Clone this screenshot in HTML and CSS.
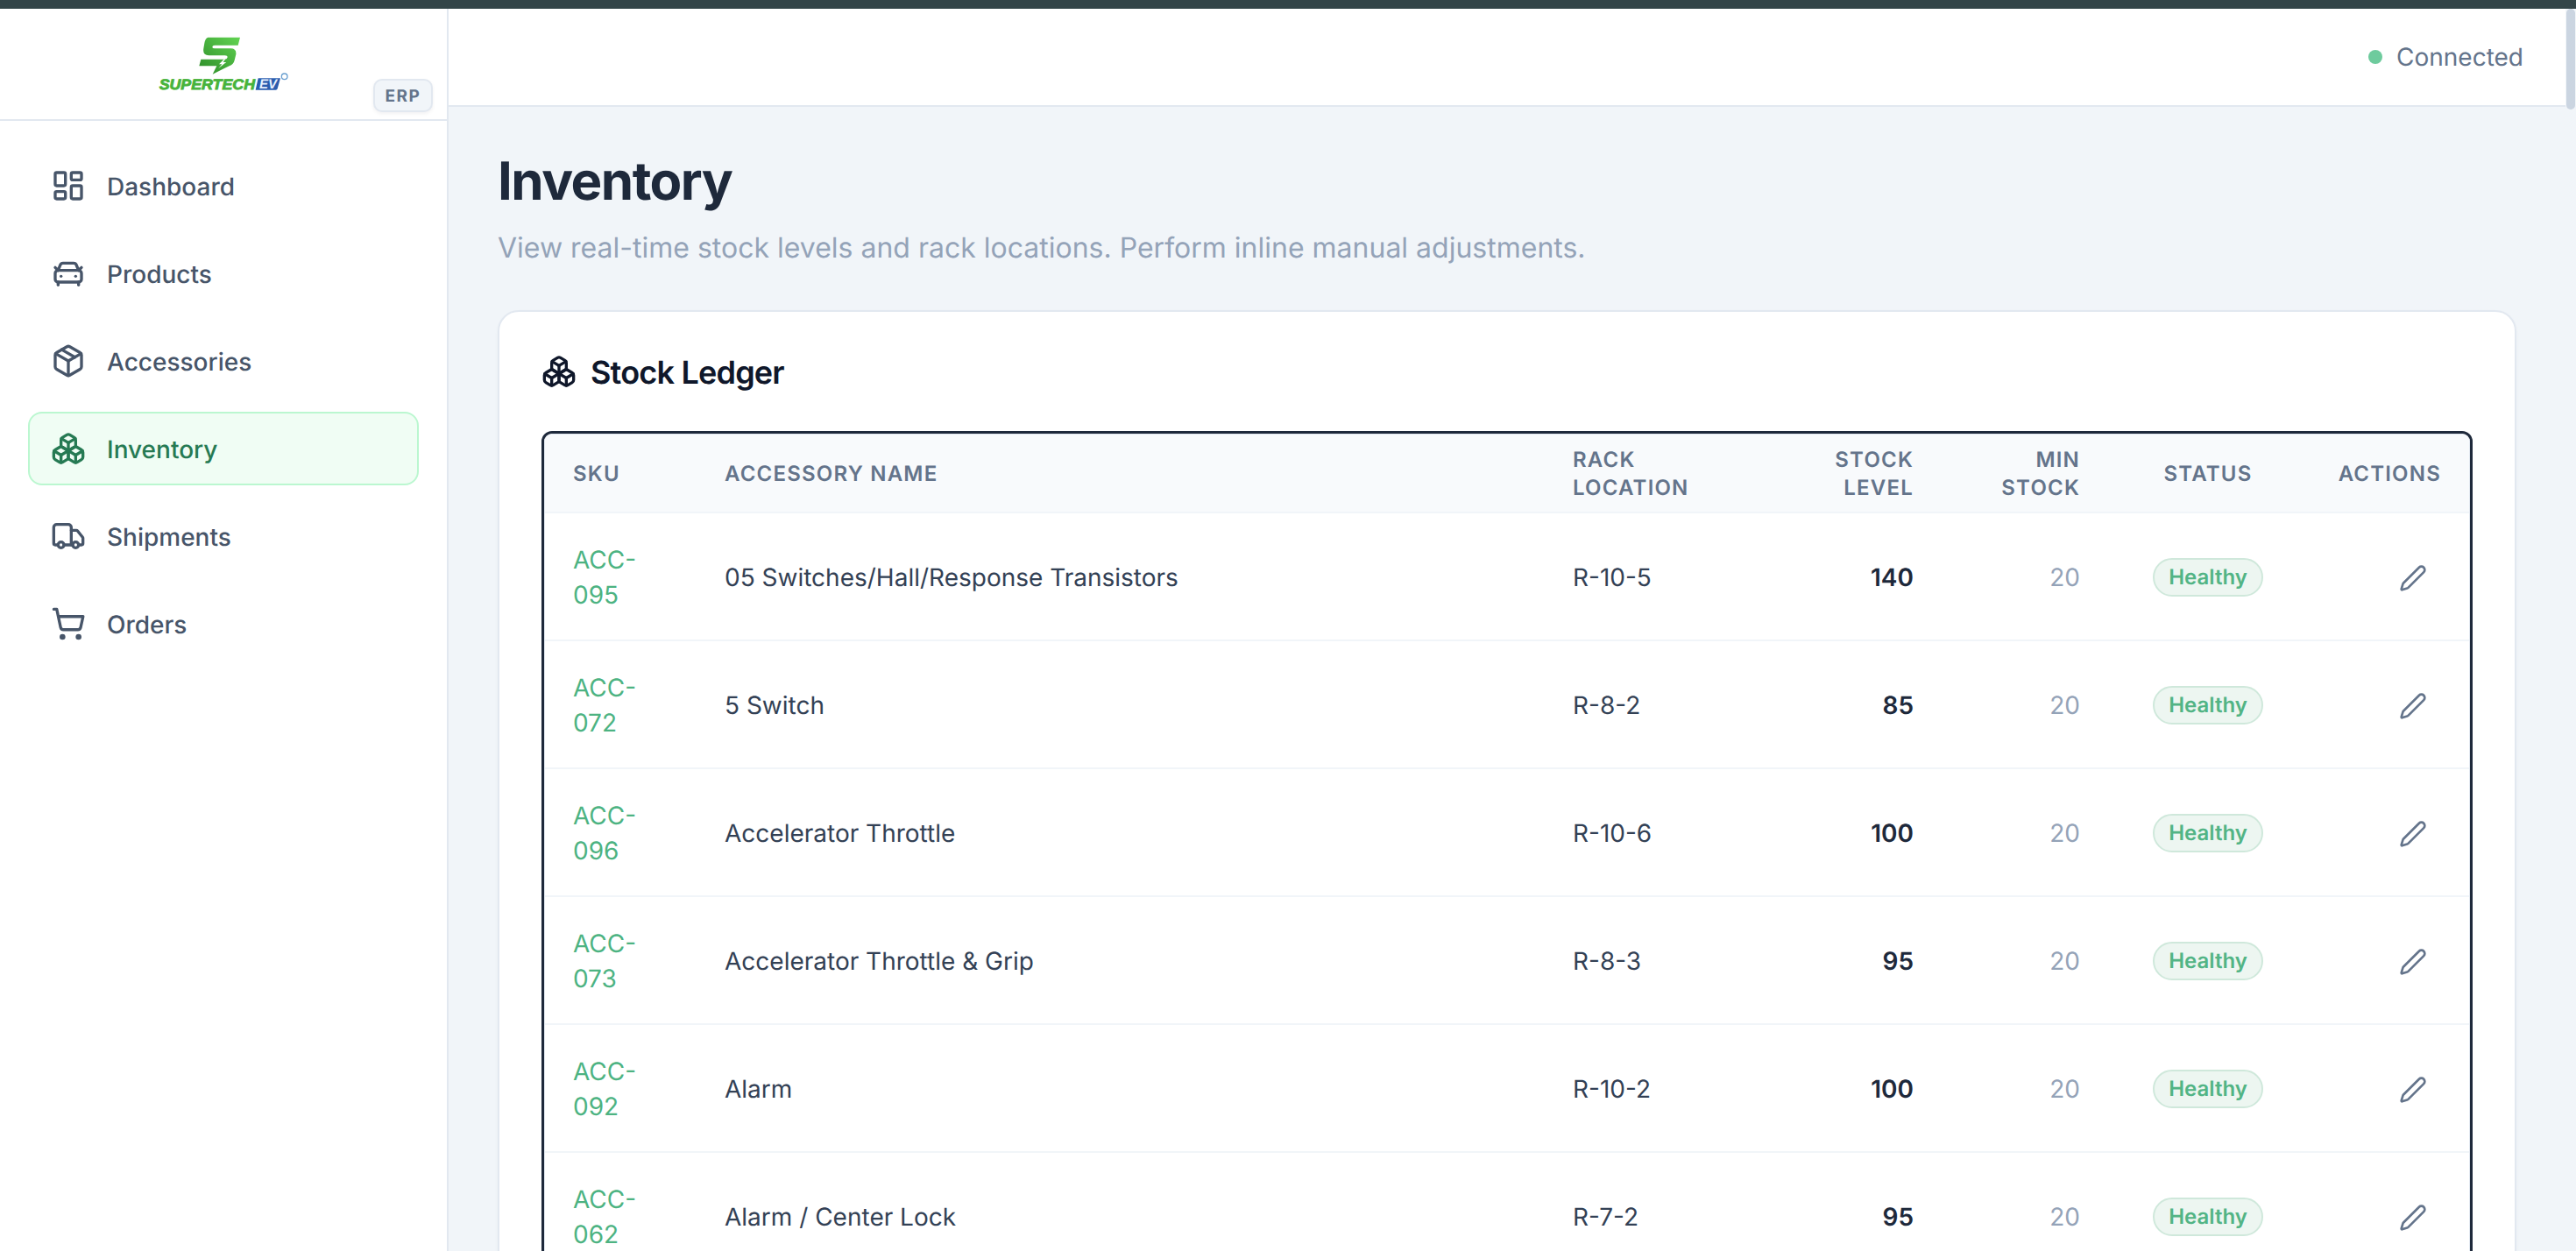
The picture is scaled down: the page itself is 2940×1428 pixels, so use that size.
FILE: index.html
```html
<!DOCTYPE html>
<html lang="en">
<head>
<meta charset="utf-8">
<title>Inventory</title>
<link rel="stylesheet" href="styles.css">
</head>
<body>
<div class="topbar"></div>
<div class="app">
  <aside class="sidebar">
    <div class="brand">
      <svg class="logo" viewBox="540 125 450 190" role="img" aria-label="SuperTech EV">
        <defs>
          <linearGradient id="logoGreen" x1="0" y1="1" x2="1" y2="0">
            <stop offset="0" stop-color="#2c8a28"/>
            <stop offset="1" stop-color="#62d452"/>
          </linearGradient>
        </defs>
        <path fill="url(#logoGreen)" d="M712 130L822 130L815 157L735 157Q727 157 727 163Q727 168 735 168L790 168Q810 168 808 188L803 208Q800 222 785 228L728 256L742 228L682 228L688 205L770 205Q778 205 779 198Q779 192 770 192L715 192Q693 192 697 168L700 150Q703 132 712 130Z"/>
        <path fill="#fff" d="M768 204L750 222L760 222L748 236L775 215L764 215L772 204Z"/>
        <text class="logo-word" x="545" y="307" textLength="328" lengthAdjust="spacingAndGlyphs">SUPERTECH</text>
        <path fill="#2a5cae" d="M884 270H960L950 306Q949 310 944 310H875Z"/>
        <text class="logo-ev" x="888" y="304" textLength="60" lengthAdjust="spacingAndGlyphs">EV</text>
        <circle cx="974" cy="264" r="10" fill="none" stroke="#6a9fd0" stroke-width="4"/>
      </svg>
      <span class="erp">ERP</span>
    </div>
    <nav class="nav">
      <a class="nav-item" href="#">
        <svg class="icon" viewBox="0 0 24 24"><rect width="7" height="9" x="3" y="3" rx="1"/><rect width="7" height="5" x="14" y="3" rx="1"/><rect width="7" height="9" x="14" y="12" rx="1"/><rect width="7" height="5" x="3" y="16" rx="1"/></svg>
        <span class="nudge">Dashboard</span>
      </a>
      <a class="nav-item" href="#">
        <svg class="icon" viewBox="0 0 24 24"><path d="m21 8-2 2-1.5-3.7A2 2 0 0 0 15.646 5H8.4a2 2 0 0 0-1.903 1.257L5 10 3 8"/><path d="M7 14h.01"/><path d="M17 14h.01"/><rect width="18" height="8" x="3" y="10" rx="2"/><path d="M5 18v2"/><path d="M19 18v2"/></svg>
        <span class="nudge">Products</span>
      </a>
      <a class="nav-item" href="#">
        <svg class="icon" viewBox="0 0 24 24"><path d="M11 21.73a2 2 0 0 0 2 0l7-4A2 2 0 0 0 21 16V8a2 2 0 0 0-1-1.73l-7-4a2 2 0 0 0-2 0l-7 4A2 2 0 0 0 3 8v8a2 2 0 0 0 1 1.73z"/><path d="M12 22V12"/><polyline points="3.29 7 12 12 20.71 7"/><path d="m7.5 4.27 9 5.15"/></svg>
        <span class="nudge">Accessories</span>
      </a>
      <a class="nav-item active" href="#">
        <svg class="icon" viewBox="0 0 24 24"><path d="M2.97 12.92A2 2 0 0 0 2 14.63v3.24a2 2 0 0 0 .97 1.71l3 1.8a2 2 0 0 0 2.06 0L12 19v-5.5l-5-3-4.03 2.42Z"/><path d="m7 16.5-4.74-2.85"/><path d="m7 16.5 5-3"/><path d="M7 16.5v5.17"/><path d="M12 13.5V19l3.97 2.38a2 2 0 0 0 2.06 0l3-1.8a2 2 0 0 0 .97-1.71v-3.24a2 2 0 0 0-.97-1.71L17 10.5l-5 3Z"/><path d="m17 16.5-5-3"/><path d="m17 16.5 4.74-2.85"/><path d="M17 16.5v5.17"/><path d="M7.97 4.42A2 2 0 0 0 7 6.13v4.37l5 3 5-3V6.13a2 2 0 0 0-.97-1.71l-3-1.8a2 2 0 0 0-2.06 0l-3 1.8Z"/><path d="M12 8 7.26 5.15"/><path d="m12 8 4.74-2.85"/><path d="M12 13.5V8"/></svg>
        <span class="nudge">Inventory</span>
      </a>
      <a class="nav-item" href="#">
        <svg class="icon" viewBox="0 0 24 24"><path d="M14 18V6a2 2 0 0 0-2-2H4a2 2 0 0 0-2 2v11a1 1 0 0 0 1 1h2"/><path d="M15 18H9"/><path d="M19 18h2a1 1 0 0 0 1-1v-3.65a1 1 0 0 0-.22-.624l-3.48-4.35A1 1 0 0 0 17.52 8H14"/><circle cx="17" cy="18" r="2"/><circle cx="7" cy="18" r="2"/></svg>
        <span class="nudge">Shipments</span>
      </a>
      <a class="nav-item" href="#">
        <svg class="icon" viewBox="0 0 24 24"><circle cx="8" cy="21" r="1"/><circle cx="19" cy="21" r="1"/><path d="M2.05 2.05h2l2.66 12.42a2 2 0 0 0 2 1.58h9.78a2 2 0 0 0 1.95-1.57l1.65-7.43H5.12"/></svg>
        <span class="nudge">Orders</span>
      </a>
    </nav>
  </aside>
  <main class="main">
    <header class="statusbar">
      <span class="dot"></span>
      <span class="status-text">Connected</span>
    </header>
    <div class="content">
      <h1 class="title">Inventory</h1>
      <p class="subtitle">View real-time stock levels and rack locations. Perform inline manual adjustments.</p>
      <section class="card">
        <h2 class="card-title">
          <svg class="icon" viewBox="0 0 24 24"><path d="M2.97 12.92A2 2 0 0 0 2 14.63v3.24a2 2 0 0 0 .97 1.71l3 1.8a2 2 0 0 0 2.06 0L12 19v-5.5l-5-3-4.03 2.42Z"/><path d="m7 16.5-4.74-2.85"/><path d="m7 16.5 5-3"/><path d="M7 16.5v5.17"/><path d="M12 13.5V19l3.97 2.38a2 2 0 0 0 2.06 0l3-1.8a2 2 0 0 0 .97-1.71v-3.24a2 2 0 0 0-.97-1.71L17 10.5l-5 3Z"/><path d="m17 16.5-5-3"/><path d="m17 16.5 4.74-2.85"/><path d="M17 16.5v5.17"/><path d="M7.97 4.42A2 2 0 0 0 7 6.13v4.37l5 3 5-3V6.13a2 2 0 0 0-.97-1.71l-3-1.8a2 2 0 0 0-2.06 0l-3 1.8Z"/><path d="M12 8 7.26 5.15"/><path d="m12 8 4.74-2.85"/><path d="M12 13.5V8"/></svg>
          <span class="nudge">Stock Ledger</span>
        </h2>
        <div class="table-frame">
          <div class="table-wrap">
            <table class="ledger">
              <colgroup>
                <col class="c-sku"><col class="c-name"><col class="c-rack"><col class="c-stock"><col class="c-min"><col class="c-status"><col class="c-actions">
              </colgroup>
              <thead>
                <tr>
                  <th>SKU</th>
                  <th>ACCESSORY NAME</th>
                  <th>RACK LOCATION</th>
                  <th class="num">STOCK LEVEL</th>
                  <th class="num">MIN STOCK</th>
                  <th class="mid">STATUS</th>
                  <th class="num">ACTIONS</th>
                </tr>
              </thead>
              <tbody>
                <tr>
                  <td class="sku">ACC-095</td><td>05 Switches/Hall/Response Transistors</td><td>R-10-5</td><td class="num stock">140</td><td class="num min">20</td>
                  <td class="mid"><span class="badge">Healthy</span></td>
                  <td class="num"><button class="edit" type="button" aria-label="Edit"><svg class="icon-sm" viewBox="0 0 24 24"><path d="M21.174 6.812a1 1 0 0 0-3.986-3.987L3.842 16.174a2 2 0 0 0-.5.83l-1.321 4.352a.5.5 0 0 0 .623.622l4.353-1.32a2 2 0 0 0 .83-.497z"/></svg></button></td>
                </tr>
                <tr>
                  <td class="sku">ACC-072</td><td>5 Switch</td><td>R-8-2</td><td class="num stock">85</td><td class="num min">20</td>
                  <td class="mid"><span class="badge">Healthy</span></td>
                  <td class="num"><button class="edit" type="button" aria-label="Edit"><svg class="icon-sm" viewBox="0 0 24 24"><path d="M21.174 6.812a1 1 0 0 0-3.986-3.987L3.842 16.174a2 2 0 0 0-.5.83l-1.321 4.352a.5.5 0 0 0 .623.622l4.353-1.32a2 2 0 0 0 .83-.497z"/></svg></button></td>
                </tr>
                <tr>
                  <td class="sku">ACC-096</td><td>Accelerator Throttle</td><td>R-10-6</td><td class="num stock">100</td><td class="num min">20</td>
                  <td class="mid"><span class="badge">Healthy</span></td>
                  <td class="num"><button class="edit" type="button" aria-label="Edit"><svg class="icon-sm" viewBox="0 0 24 24"><path d="M21.174 6.812a1 1 0 0 0-3.986-3.987L3.842 16.174a2 2 0 0 0-.5.83l-1.321 4.352a.5.5 0 0 0 .623.622l4.353-1.32a2 2 0 0 0 .83-.497z"/></svg></button></td>
                </tr>
                <tr>
                  <td class="sku">ACC-073</td><td>Accelerator Throttle &amp; Grip</td><td>R-8-3</td><td class="num stock">95</td><td class="num min">20</td>
                  <td class="mid"><span class="badge">Healthy</span></td>
                  <td class="num"><button class="edit" type="button" aria-label="Edit"><svg class="icon-sm" viewBox="0 0 24 24"><path d="M21.174 6.812a1 1 0 0 0-3.986-3.987L3.842 16.174a2 2 0 0 0-.5.83l-1.321 4.352a.5.5 0 0 0 .623.622l4.353-1.32a2 2 0 0 0 .83-.497z"/></svg></button></td>
                </tr>
                <tr>
                  <td class="sku">ACC-092</td><td>Alarm</td><td>R-10-2</td><td class="num stock">100</td><td class="num min">20</td>
                  <td class="mid"><span class="badge">Healthy</span></td>
                  <td class="num"><button class="edit" type="button" aria-label="Edit"><svg class="icon-sm" viewBox="0 0 24 24"><path d="M21.174 6.812a1 1 0 0 0-3.986-3.987L3.842 16.174a2 2 0 0 0-.5.83l-1.321 4.352a.5.5 0 0 0 .623.622l4.353-1.32a2 2 0 0 0 .83-.497z"/></svg></button></td>
                </tr>
                <tr>
                  <td class="sku">ACC-062</td><td>Alarm / Center Lock</td><td>R-7-2</td><td class="num stock">95</td><td class="num min">20</td>
                  <td class="mid"><span class="badge">Healthy</span></td>
                  <td class="num"><button class="edit" type="button" aria-label="Edit"><svg class="icon-sm" viewBox="0 0 24 24"><path d="M21.174 6.812a1 1 0 0 0-3.986-3.987L3.842 16.174a2 2 0 0 0-.5.83l-1.321 4.352a.5.5 0 0 0 .623.622l4.353-1.32a2 2 0 0 0 .83-.497z"/></svg></button></td>
                </tr>
              </tbody>
            </table>
          </div>
        </div>
      </section>
    </div>
    <div class="scroll-thumb"></div>
  </main>
</div>
</body>
</html>
```
FILE: styles.css
```css
* { box-sizing: border-box; }
html, body { height: 100%; }
body {
  margin: 0;
  display: flex;
  flex-direction: column;
  overflow: hidden;
  background: #f1f5f9;
  color: #334155;
  font-family: Inter, "Noto Sans", sans-serif;
  font-size: 28px;
  line-height: 40px;
  text-rendering: geometricPrecision;
}
.topbar { height: 10px; flex: none; background: #334548; }
.app { flex: 1; min-height: 0; display: flex; }

.sidebar {
  width: 512px;
  flex: none;
  display: flex;
  flex-direction: column;
  background: #fff;
  border-right: 2px solid #e2e8f0;
}
.brand {
  position: relative;
  height: 128px;
  flex: none;
  display: flex;
  align-items: center;
  justify-content: center;
  border-bottom: 2px solid #e2e8f0;
}
.logo { width: 150px; height: 63.33px; display: block; }
.logo-word { font: italic 700 50px "Liberation Sans", sans-serif; fill: #47b33b; stroke: #47b33b; stroke-width: 2.5px; }
.logo-ev { font: italic 700 46px "Liberation Sans", sans-serif; fill: #e8f1ff; }
.erp {
  position: absolute;
  right: 16px;
  bottom: 8px;
  width: 68px;
  height: 38px;
  display: flex;
  align-items: center;
  justify-content: center;
  background: #f1f5f9;
  border: 2px solid #e2e8f0;
  border-radius: 10px;
  box-shadow: 0 2px 4px rgba(15, 23, 42, 0.06);
  color: #64748b;
  font-size: 19px;
  line-height: 1;
  font-weight: 700;
  letter-spacing: 1.5px;
}
.nav { display: flex; flex-direction: column; gap: 16px; padding: 32px; }
.nav-item {
  height: 84px;
  display: flex;
  align-items: center;
  gap: 24px;
  padding: 0 24px;
  border: 2px solid transparent;
  border-radius: 16px;
  color: #475569;
  text-decoration: none;
  font-weight: 500;
}
.nudge { padding-top: 2px; }
.nav-item.active { background: #f0fdf4; border-color: #bbf7d0; color: #267a53; }
.icon {
  width: 40px;
  height: 40px;
  flex: none;
  fill: none;
  stroke: currentColor;
  stroke-width: 2;
  stroke-linecap: round;
  stroke-linejoin: round;
}
.icon-sm {
  width: 32px;
  height: 32px;
  display: block;
  fill: none;
  stroke: currentColor;
  stroke-width: 2;
  stroke-linecap: round;
  stroke-linejoin: round;
}

.main { position: relative; flex: 1; min-width: 0; padding-right: 12px; overflow: hidden; }
.scroll-thumb { position: absolute; top: 0; right: 1px; width: 10px; height: 115px; background: #cbd5e1; border-radius: 5px; }

.statusbar {
  height: 112px;
  display: flex;
  align-items: center;
  justify-content: flex-end;
  gap: 16px;
  padding: 0 48px;
  background: #fff;
  border-bottom: 2px solid #e2e8f0;
}
.dot { width: 16px; height: 16px; border-radius: 50%; background: #6ecb9d; }
.status-text { color: #64748b; }

.content { padding: 48px 56px; }
.title { margin: 0; padding-top: 2px; font-size: 60px; line-height: 70px; font-weight: 700; color: #1e293b; letter-spacing: -1.5px; }
.subtitle { margin: 16px 0 48px; padding-top: 2px; font-size: 32px; line-height: 46px; color: #94a3b8; }

.card {
  padding: 48px;
  background: #fff;
  border: 2px solid #e2e8f0;
  border-radius: 24px;
  box-shadow: 0 2px 4px rgba(15, 23, 42, 0.03);
}
.card-title {
  display: flex;
  align-items: center;
  gap: 16px;
  height: 40px;
  margin: 0 0 48px;
  font-size: 36px;
  line-height: 38px;
  font-weight: 600;
  letter-spacing: -0.8px;
  color: #0f172a;
}
.table-frame { border: 3px solid #1e293b; border-radius: 12px; overflow: hidden; }
.table-wrap { min-height: 1200px; border: 1px solid #e2e8f0; border-bottom: 0; border-radius: 9px 9px 0 0; overflow: hidden; }
.ledger { width: 100%; table-layout: fixed; border-collapse: collapse; }
.c-sku { width: 173px; }
.c-name { width: 968px; }
.c-rack { width: 231px; }
.c-stock { width: 222px; }
.c-min { width: 190px; }
.c-status { width: 228px; }
.c-actions { width: 184px; }
.ledger th {
  height: 88px;
  padding: 13px 32px 11px;
  background: #f8fafc;
  border-bottom: 2px solid #f1f5f9;
  color: #64748b;
  font-size: 24px;
  line-height: 32px;
  font-weight: 600;
  letter-spacing: 1.2px;
  text-align: left;
}
.ledger td { padding: 33px 32px 31px; border-bottom: 2px solid #f1f5f9; color: #334155; vertical-align: middle; }
.ledger .num { text-align: right; }
.ledger .mid { text-align: center; }
.ledger .sku { color: #4db382; }
.ledger .stock { color: #1e293b; font-weight: 600; }
.ledger .min { color: #94a3b8; }
.badge {
  display: inline-block;
  padding: 0 16px;
  background: #edf6f1;
  border: 2px solid #cfe8db;
  border-radius: 999px;
  color: #52b485;
  font-size: 24px;
  line-height: 40px;
  font-weight: 600;
}
.edit {
  display: inline-block;
  margin: -12px 0;
  padding: 16px;
  background: none;
  border: 0;
  color: #64748b;
  vertical-align: middle;
}
```
